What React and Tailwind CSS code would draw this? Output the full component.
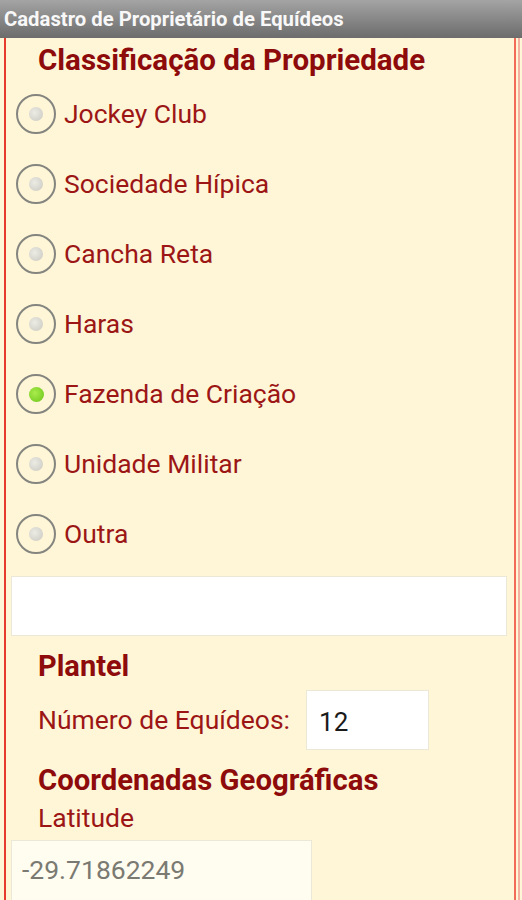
const options = [
  { label: "Jockey Club" },
  { label: "Sociedade Hípica" },
  { label: "Cancha Reta" },
  { label: "Haras" },
  { label: "Fazenda de Criação", checked: true },
  { label: "Unidade Militar" },
  { label: "Outra" },
];

function Radio({ checked }) {
  return (
    <div className="w-[40px] h-[40px] rounded-full border-2 border-[#858580] flex items-center justify-center shrink-0">
      {checked ? (
        <div className="w-[15px] h-[15px] rounded-full bg-[radial-gradient(circle_at_40%_40%,#a8ec4c,#6cc419)]" />
      ) : (
        <div className="w-[14px] h-[14px] rounded-full bg-[radial-gradient(circle_at_40%_40%,#ecebe4,#c9c8c0)]" />
      )}
    </div>
  );
}

export default function App() {
  return (
    <div className="w-[522px] h-[900px] overflow-hidden bg-[#fff6d8] font-['Roboto',sans-serif]">
      {/* title bar */}
      <div className="h-[38px] bg-gradient-to-b from-[#a4a4a4] to-[#6c6c6c] flex items-center px-[4px]">
        <span className="text-[#f8f8f8] text-[20.3px] leading-none font-bold whitespace-nowrap">Cadastro de Proprietário de Equídeos</span>
      </div>

      <div className="pl-[4px] pr-[2px] h-[862px]">
        <div className="h-full border-r-2 border-[#f4b0a0] pr-[2px]">
          <div className="h-full border-l-2 border-r-2 border-l-[#e8392e] border-r-[#f26a58] pr-[7px]">
            <div className="h-[41px] pl-[32px] pt-[5px]">
              <h1 className="text-[29.5px] leading-[34px] font-bold text-[#8e0b0b] whitespace-nowrap">Classificação da Propriedade</h1>
            </div>

            {options.map((o) => (
              <div key={o.label} className="h-[70px] flex items-center pl-[10px]">
                <Radio checked={o.checked} />
                <span className="ml-[8px] text-[26.5px] leading-[32px] text-[#9c1616]">{o.label}</span>
              </div>
            ))}

            <div className="mt-[7px] ml-[5px] h-[60px] bg-white border border-[#ece8d8]" />

            <div className="mt-[13px] pl-[32px] text-[29px] leading-[34px] font-bold text-[#8e0b0b]">Plantel</div>

            <div className="mt-[7px] flex items-center pl-[32px]">
              <span className="text-[26.5px] leading-[32px] text-[#9c1616] whitespace-nowrap">Número de Equídeos:</span>
              <div className="ml-[16px] w-[123px] h-[60px] bg-white border border-[#ece8d8] flex items-center pl-[12px] pt-[4px]">
                <span className="text-[26px] leading-[32px] text-[#1a1a1a]">12</span>
              </div>
            </div>

            <div className="mt-[13px] pl-[32px] text-[29.3px] leading-[34px] font-bold text-[#8e0b0b] whitespace-nowrap">Coordenadas Geográficas</div>
            <div className="mt-[6px] pl-[32px] text-[26.5px] leading-[30px] text-[#9c1616]">Latitude</div>

            <div className="mt-[7px] ml-[5px] w-[301px] h-[62px] bg-[#fffcf0] border border-[#ece8d8] flex items-center pl-[10px] pb-[2px]">
              <span className="text-[26.5px] leading-[32px] text-[#7a7a72]">-29.71862249</span>
            </div>
          </div>
        </div>
      </div>
    </div>
  );
}
